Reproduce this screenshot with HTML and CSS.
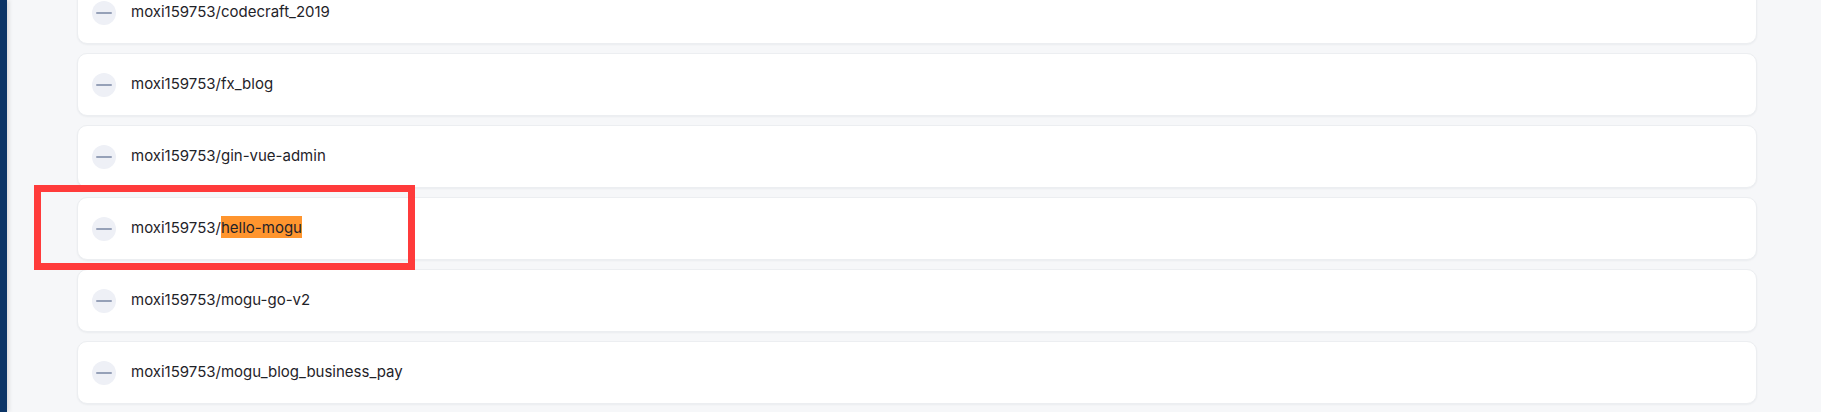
FILE: index.html
```html
<!DOCTYPE html>
<html lang="zh">
<head>
<meta charset="utf-8">
<title>Repos</title>
<link rel="stylesheet" href="styles.css">
</head>
<body>
<div class="app">
  <aside class="sidebar"></aside>
  <main class="main">
    <ul class="repo-list">
      <li class="repo-card"><span class="dash-icon"><span></span></span><span class="repo-name">moxi159753/codecraft_2019</span></li>
      <li class="repo-card"><span class="dash-icon"><span></span></span><span class="repo-name">moxi159753/fx_blog</span></li>
      <li class="repo-card"><span class="dash-icon"><span></span></span><span class="repo-name">moxi159753/gin-vue-admin</span></li>
      <li class="repo-card"><span class="dash-icon"><span></span></span><span class="repo-name">moxi159753/<mark class="hit">hello-mogu</mark></span></li>
      <li class="repo-card"><span class="dash-icon"><span></span></span><span class="repo-name">moxi159753/mogu-go-v2</span></li>
      <li class="repo-card"><span class="dash-icon"><span></span></span><span class="repo-name">moxi159753/mogu_blog_business_pay</span></li>
    </ul>
  </main>
  <div class="annotation"></div>
</div>
</body>
</html>
```

FILE: styles.css
```css
html, body {
  margin: 0;
  padding: 0;
  height: 100%;
  overflow: hidden;
}
body {
  background: #f6f7f9;
  font-family: Inter, "Noto Sans", "Liberation Sans", sans-serif;
  color: #1f2329;
}
.app {
  position: relative;
  display: flex;
  height: 412px;
  overflow: hidden;
}
.sidebar {
  flex: 0 0 7px;
  background: #0b3466;
  box-shadow: 2px 0 4px rgba(0, 0, 0, 0.12);
  z-index: 1;
}
.main {
  flex: 1;
  padding: 0 64px 0 70px;
}
.repo-list {
  list-style: none;
  margin: -19px 0 0 0;
  padding: 0;
  display: flex;
  flex-direction: column;
  gap: 9px;
}
.repo-card {
  box-sizing: border-box;
  height: 63px;
  background: #ffffff;
  border: 1px solid #eceef1;
  border-radius: 10px;
  box-shadow: 0 1px 2px rgba(20, 30, 50, 0.05);
  display: flex;
  align-items: center;
  padding-left: 14px;
}
.dash-icon {
  width: 24px;
  height: 24px;
  border-radius: 50%;
  background: #eef0f6;
  display: flex;
  align-items: center;
  justify-content: center;
  margin-right: 15px;
}
.dash-icon span {
  width: 16px;
  height: 2px;
  background: #96a1b8;
  border-radius: 1px;
}
.repo-name {
  font-size: 15px;
  line-height: 21px;
  color: #1f2329;
  margin-top: -2px;
}
.hit {
  background: #ff952e;
  color: #1f2329;
  padding: 2px 0 1px;
}
.annotation {
  position: absolute;
  left: 34px;
  top: 185px;
  width: 381px;
  height: 85px;
  box-sizing: border-box;
  border: 7px solid #ff3b3b;
}
```
